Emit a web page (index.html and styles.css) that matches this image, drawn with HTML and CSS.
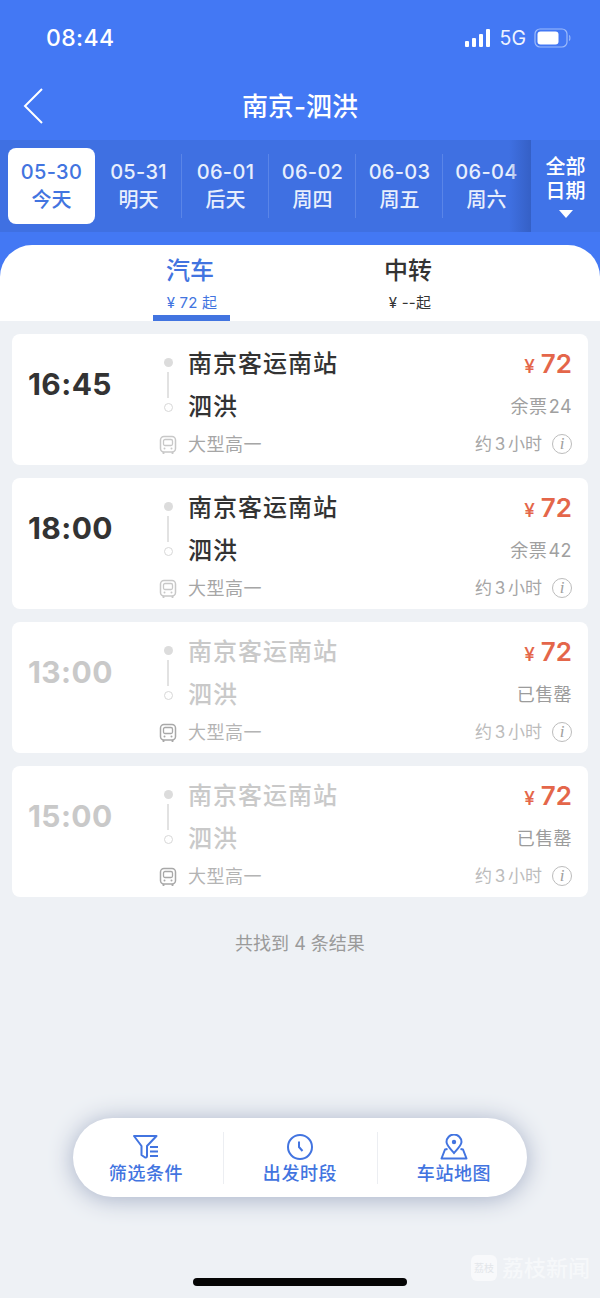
FILE: index.html
```html
<!DOCTYPE html>
<html lang="zh">
<head>
<meta charset="utf-8">
<title>南京-泗洪</title>
<link rel="stylesheet" href="styles.css">
</head>
<body>
<div class="app">
  <header class="header">
    <div class="status">
      <span class="clock">08:44</span>
      <div class="status-right">
        <svg class="signal" width="27" height="18" viewBox="0 0 27 18"><rect x="0" y="12" width="4" height="6" rx="1"/><rect x="7" y="9" width="4" height="9" rx="1"/><rect x="14" y="5" width="4" height="13" rx="1"/><rect x="21" y="0" width="4" height="18" rx="1"/></svg>
        <span class="net">5G</span>
        <svg class="battery" width="38" height="20" viewBox="0 0 38 20"><rect x="1" y="1" width="32" height="18" rx="5" fill="none" stroke="#9dbbfb" stroke-width="1.2"/><rect x="3.5" y="3.5" width="21" height="13" rx="3" fill="#fff"/><path d="M35 7.5c1.200.4 1.200 4.600 0 5" fill="none" stroke="#9dbbfb" stroke-width="1.200"/></svg>
      </div>
    </div>
    <div class="nav">
      <svg class="back" width="24" height="38" viewBox="0 0 24 38"><path d="M20 2 3 19l17 17" fill="none" stroke="#fff" stroke-width="2"/></svg>
      <h1 class="title">南京-泗洪</h1>
    </div>
    <div class="dates">
      <div class="date-list">
        <div class="date active"><b>05-30</b><span>今天</span></div>
        <div class="date"><b>05-31</b><span>明天</span></div>
        <div class="date sep"><b>06-01</b><span>后天</span></div>
        <div class="date sep"><b>06-02</b><span>周四</span></div>
        <div class="date sep"><b>06-03</b><span>周五</span></div>
        <div class="date sep"><b>06-04</b><span>周六</span></div>
      </div>
      <div class="all-dates">
        <span>全部</span><span>日期</span>
        <i class="caret"></i>
      </div>
    </div>
  </header>

  <div class="tabs-back">
    <nav class="tabs">
      <div class="tab on"><strong>汽车</strong><small>¥ 72 起</small><i class="tab-bar"></i></div>
      <div class="tab"><strong>中转</strong><small>¥ --起</small></div>
    </nav>
  </div>

  <main class="results">
    <article class="card">
      <div class="time">16:45</div>
      <div class="route"><i class="dot"></i><i class="line"></i><i class="ring"></i>
        <svg class="bus" width="18" height="20" viewBox="0 0 18 20"><rect x="1.500" y="1.500" width="15" height="15.500" rx="3.500" fill="none" stroke="#c8c8c8" stroke-width="1.500"/><rect x="4.500" y="4.500" width="9" height="6" rx="1.500" fill="none" stroke="#c8c8c8" stroke-width="1.300"/><path d="M4.500 17v2M13.500 17v2" stroke="#c8c8c8" stroke-width="1.800"/><circle cx="5.500" cy="13.600" r="1" fill="#c8c8c8"/><circle cx="12.500" cy="13.600" r="1" fill="#c8c8c8"/></svg>
      </div>
      <div class="info"><div class="from">南京客运南站</div><div class="to">泗洪</div><div class="model">大型高一</div></div>
      <div class="side">
        <div class="price"><em>¥</em>72</div>
        <div class="left">余票 24</div>
        <div class="dur"><span>约 3 小时</span><i class="tip">i</i></div>
      </div>
    </article>
    <article class="card">
      <div class="time">18:00</div>
      <div class="route"><i class="dot"></i><i class="line"></i><i class="ring"></i>
        <svg class="bus" width="18" height="20" viewBox="0 0 18 20"><rect x="1.500" y="1.500" width="15" height="15.500" rx="3.500" fill="none" stroke="#c8c8c8" stroke-width="1.500"/><rect x="4.500" y="4.500" width="9" height="6" rx="1.500" fill="none" stroke="#c8c8c8" stroke-width="1.300"/><path d="M4.500 17v2M13.500 17v2" stroke="#c8c8c8" stroke-width="1.800"/><circle cx="5.500" cy="13.600" r="1" fill="#c8c8c8"/><circle cx="12.500" cy="13.600" r="1" fill="#c8c8c8"/></svg>
      </div>
      <div class="info"><div class="from">南京客运南站</div><div class="to">泗洪</div><div class="model">大型高一</div></div>
      <div class="side">
        <div class="price"><em>¥</em>72</div>
        <div class="left">余票 42</div>
        <div class="dur"><span>约 3 小时</span><i class="tip">i</i></div>
      </div>
    </article>
    <article class="card off">
      <div class="time">13:00</div>
      <div class="route"><i class="dot"></i><i class="line"></i><i class="ring"></i>
        <svg class="bus" width="18" height="20" viewBox="0 0 18 20"><rect x="1.500" y="1.500" width="15" height="15.500" rx="3.500" fill="none" stroke="#a8a8a8" stroke-width="1.500"/><rect x="4.500" y="4.500" width="9" height="6" rx="1.500" fill="none" stroke="#a8a8a8" stroke-width="1.300"/><path d="M4.500 17v2M13.500 17v2" stroke="#a8a8a8" stroke-width="1.800"/><circle cx="5.500" cy="13.600" r="1" fill="#a8a8a8"/><circle cx="12.500" cy="13.600" r="1" fill="#a8a8a8"/></svg>
      </div>
      <div class="info"><div class="from">南京客运南站</div><div class="to">泗洪</div><div class="model">大型高一</div></div>
      <div class="side">
        <div class="price"><em>¥</em>72</div>
        <div class="left">已售罄</div>
        <div class="dur"><span>约 3 小时</span><i class="tip">i</i></div>
      </div>
    </article>
    <article class="card off">
      <div class="time">15:00</div>
      <div class="route"><i class="dot"></i><i class="line"></i><i class="ring"></i>
        <svg class="bus" width="18" height="20" viewBox="0 0 18 20"><rect x="1.500" y="1.500" width="15" height="15.500" rx="3.500" fill="none" stroke="#a8a8a8" stroke-width="1.500"/><rect x="4.500" y="4.500" width="9" height="6" rx="1.500" fill="none" stroke="#a8a8a8" stroke-width="1.300"/><path d="M4.500 17v2M13.500 17v2" stroke="#a8a8a8" stroke-width="1.800"/><circle cx="5.500" cy="13.600" r="1" fill="#a8a8a8"/><circle cx="12.500" cy="13.600" r="1" fill="#a8a8a8"/></svg>
      </div>
      <div class="info"><div class="from">南京客运南站</div><div class="to">泗洪</div><div class="model">大型高一</div></div>
      <div class="side">
        <div class="price"><em>¥</em>72</div>
        <div class="left">已售罄</div>
        <div class="dur"><span>约 3 小时</span><i class="tip">i</i></div>
      </div>
    </article>
    <p class="count">共找到 4 条结果</p>
  </main>

  <div class="toolbar">
    <div class="tool first">
      <svg width="28" height="26" viewBox="0 0 28 26"><path d="M2 2h22.500l-9.500 10v10c0 1.500-1.200 2-2.300 1.200L9.500 21V12Z" fill="none" stroke="#4274e0" stroke-width="2" stroke-linejoin="round"/><path d="M18 13h8M18 17.500h8M18 22h8" stroke="#4274e0" stroke-width="2"/></svg>
      <span>筛选条件</span>
    </div>
    <div class="tool mid">
      <svg width="28" height="26" viewBox="0 0 28 26"><circle cx="14" cy="13" r="12" fill="none" stroke="#4274e0" stroke-width="2"/><path d="M13 7.500V13l3.500 4" fill="none" stroke="#4274e0" stroke-width="2"/></svg>
      <span>出发时段</span>
    </div>
    <div class="tool last">
      <svg width="28" height="26" viewBox="0 0 28 26"><path d="M14 19C9.500 14 6.500 11 6.500 8a7.500 7.500 0 0 1 15 0c0 3-3 6-7.500 11Z" fill="none" stroke="#4274e0" stroke-width="2"/><circle cx="14" cy="8" r="2.200" fill="#4274e0"/><path d="M7.500 15 5 15.500 1.500 24.500h25L23 15.500 20.500 15" fill="none" stroke="#4274e0" stroke-width="2" stroke-linejoin="round"/></svg>
      <span>车站地图</span>
    </div>
  </div>

  <div class="home"></div>

  <div class="mark"><i class="mark-logo">荔枝</i><span>荔枝新闻</span></div>
</div>
</body>
</html>
```
FILE: styles.css
```css
* { box-sizing: border-box; }
html, body { margin: 0; padding: 0; }
body { background: #eef1f5; font-family: "Inter", "Noto Sans CJK SC", sans-serif; color: #333; }
i, em { font-style: normal; }
.app { position: relative; width: 600px; height: 1298px; display: flex; flex-direction: column; overflow: hidden; }

.header { background: #4378f4; height: 245px; color: #fff; }
.status { height: 76px; padding: 24px 28px 0 46px; display: flex; justify-content: space-between; align-items: flex-start; }
.clock { font-size: 23px; line-height: 28px; font-weight: 500; letter-spacing: .4px; }
.status-right { display: flex; align-items: center; gap: 8px; height: 28px; }
.signal { fill: #fff; }
.net { font-size: 19.500px; font-weight: 400; color: #eef3ff; }
.nav { height: 64px; position: relative; display: flex; justify-content: center; align-items: flex-start; padding-top: 13px; }
.back { position: absolute; left: 22px; top: 11px; }
.title { margin: 0; font-size: 26px; line-height: 36px; font-weight: 500; }

.dates { height: 92px; display: flex; background: #3f70e2; }
.date-list { position: relative; width: 531px; padding: 8px 0 8px 8px; display: flex; }
.date-list::after { content: ""; position: absolute; right: 0; top: 0; bottom: 0; width: 22px; background: linear-gradient(90deg, rgba(53, 96, 198, 0), #3560c6); }
.date { width: 87px; height: 76px; display: flex; flex-direction: column; align-items: center; justify-content: center; border-radius: 8px; position: relative; flex: none; color: #e8effd; }
.date b { font-size: 20px; line-height: 28px; font-weight: 500; letter-spacing: .3px; }
.date span { font-size: 20px; line-height: 29px; font-weight: 500; }
.date.sep::before { content: ""; position: absolute; left: -1px; top: 6px; bottom: 6px; width: 1px; background: #5a85e8; }
.date.active { background: #fff; color: #4274e0; }
.all-dates { flex: 1; display: flex; flex-direction: column; align-items: center; padding-top: 15px; background: #4073e8; }
.all-dates span { font-size: 20px; line-height: 24px; font-weight: 500; }
.caret { margin-top: 7px; width: 0; height: 0; border-left: 7px solid transparent; border-right: 7px solid transparent; border-top: 8px solid #fff; }

.tabs-back { background: #4378f4; }
.tabs { height: 76px; background: #fff; border-radius: 32px 32px 0 0; display: flex; padding-left: 81px; }
.tab { width: 218px; display: flex; flex-direction: column; align-items: center; padding-top: 9px; position: relative; color: #333; }
.tab strong { font-size: 24px; line-height: 34px; font-weight: 500; }
.tab small { font-size: 15px; line-height: 20px; margin-top: 5px; padding-left: 4px; letter-spacing: .2px; }
.tab.on { color: #4274e0; }
.tab-bar { position: absolute; left: 72px; width: 77px; bottom: 0; height: 6px; background: #4274e0; }

.results { padding: 13px 12px 0; display: flex; flex-direction: column; gap: 13px; }
.card { height: 131px; background: #fff; border-radius: 8px; display: flex; position: relative; }
.time { width: 142px; padding: 31px 0 0 16px; font-size: 30px; line-height: 38px; font-weight: 700; letter-spacing: .4px; color: #333; }
.route { width: 28px; padding-top: 24px; display: flex; flex-direction: column; align-items: center; }
.dot { width: 9px; height: 9px; border-radius: 50%; background: #dcdcdc; }
.line { width: 2px; height: 26px; margin: 5px 0; background: #e2e2e2; }
.ring { width: 9px; height: 9px; border-radius: 50%; border: 1.500px solid #d8d8d8; }
.bus { margin-top: 23px; margin-left: 0; }
.info { flex: 1; padding: 12px 0 0 6px; }
.from, .to { font-size: 24px; line-height: 36px; font-weight: 500; letter-spacing: 1px; color: #333; }
.to { margin-top: 7px; }
.model { font-size: 18px; line-height: 26px; margin-top: 7px; letter-spacing: .5px; color: #a6a6a6; }
.side { width: 200px; padding-right: 16px; display: flex; flex-direction: column; align-items: flex-end; }
.price { padding-top: 12px; line-height: 36px; font-size: 26px; font-weight: 600; color: #e4664a; }
.price em { font-size: 19px; margin-right: 6px; font-weight: 500; }
.left { font-size: 18px; line-height: 26px; margin-top: 9px; letter-spacing: .4px; word-spacing: -4px; color: #a0a0a0; }
.dur { display: flex; align-items: center; gap: 10px; margin-top: 11px; font-size: 17px; line-height: 26px; word-spacing: -2px; color: #a6a6a6; }
.tip { width: 20px; height: 20px; border-radius: 50%; border: 1.500px solid #bcbcbc; font: italic 17px/17px "Liberation Serif", serif; text-align: center; color: #a0a0a0; }

.card.off .time, .card.off .from, .card.off .to { color: #c9c9c9; }
.card.off .model { color: #b4b4b4; }
.card.off .left { color: #9c9c9c; }
.card.off .dur { color: #bcbcbc; }

.count { margin: 21px 0 0; text-align: center; font-size: 18px; line-height: 26px; color: #9a9a9a; }

.toolbar { position: absolute; left: 73px; top: 1118px; width: 454px; height: 79px; background: #fff; border-radius: 40px; box-shadow: 0 2px 24px #a5afc6; display: flex; }
.tool { display: flex; flex-direction: column; align-items: center; padding-top: 16px; position: relative; color: #4274e0; }
.tool.first { width: 150px; padding-right: 4px; }
.tool.mid { width: 154px; }
.tool.last { width: 150px; padding-left: 4px; }
.tool + .tool::before { content: ""; position: absolute; left: 0; top: 14px; bottom: 13px; width: 1px; background: #eceef2; }
.tool span { font-size: 18px; line-height: 24px; font-weight: 500; letter-spacing: .6px; margin-top: 2px; }

.home { position: absolute; left: 193px; top: 1278px; width: 214px; height: 8px; background: #050505; border-radius: 4px; }

.mark { position: absolute; left: 471px; top: 1255px; display: flex; align-items: center; gap: 5px; color: #f6f8fa; }
.mark-logo { width: 26px; height: 26px; border-radius: 6px; background: #f8f9fb; color: #e3e6ea; font-size: 10px; line-height: 26px; text-align: center; }
.mark span { font-size: 22px; line-height: 26px; font-weight: 500; }
```
